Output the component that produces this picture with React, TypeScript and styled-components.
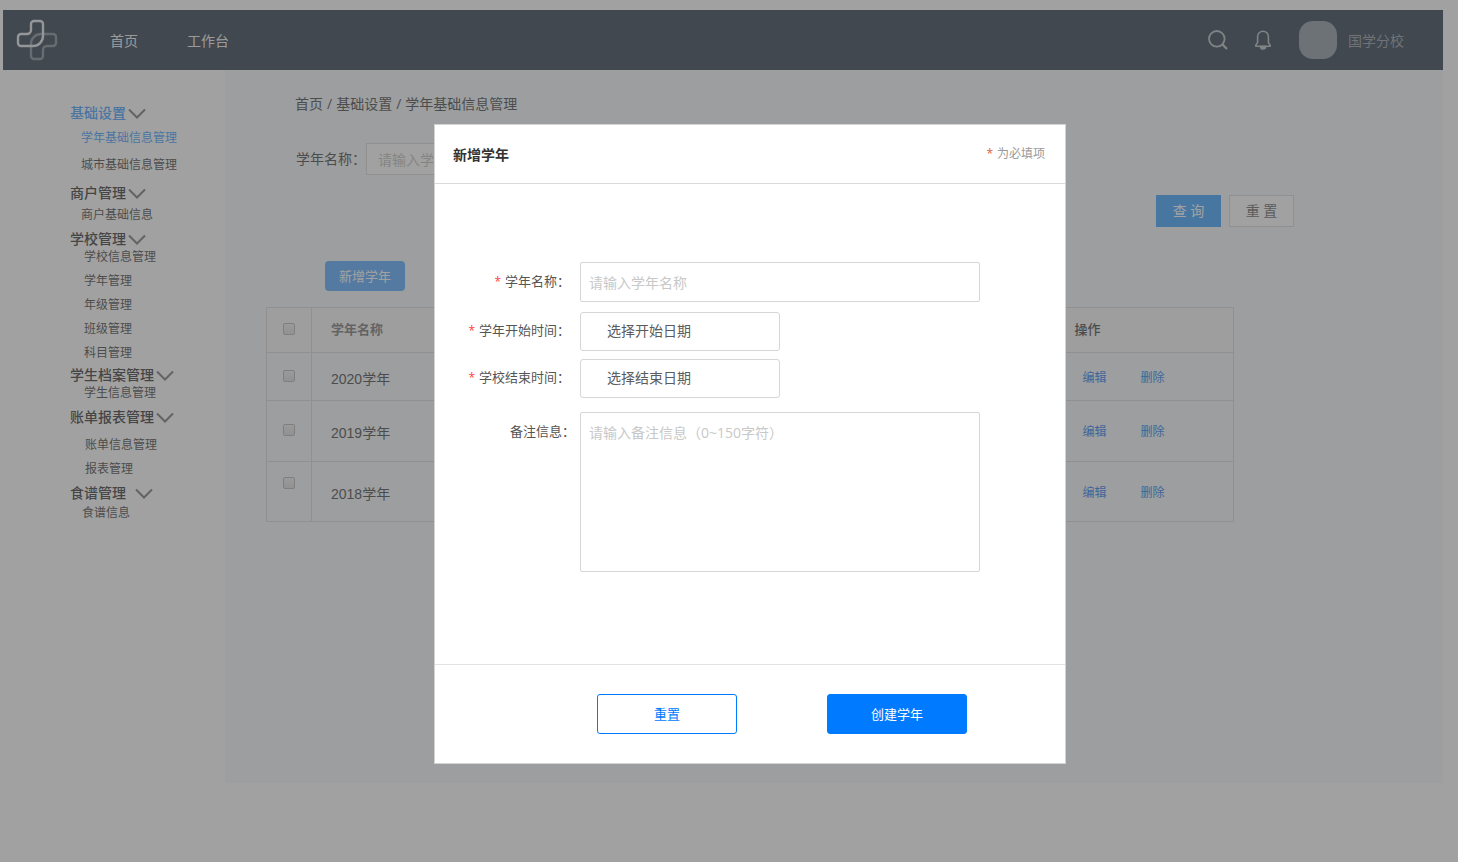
import React from "react";
import styled, { createGlobalStyle } from "styled-components";

const GlobalStyle = createGlobalStyle`
  * { box-sizing: border-box; }
  html, body { margin: 0; background: #fff; }
  body, button, input, textarea {
    font-family: "Open Sans", "Noto Sans CJK SC", sans-serif;
    font-size: 14px;
    line-height: 20px;
    color: #444;
  }
  a { color: inherit; text-decoration: none; }
  ul { list-style: none; margin: 0; padding: 0; }
  h2, h3 { margin: 0; }
`;

const Page = styled.div`
  min-height: 100vh;
  padding: 10px 15px 0 3px;
`;

const TopBar = styled.header`
  display: flex;
  align-items: center;
  height: 60px;
  padding: 0 39px 0 13px;
  background: #2a3a4c;
  color: #f0f0f0;
`;

const TopNav = styled.nav`
  display: flex;
  gap: 49px;
  margin-left: 52px;
  padding-top: 1px;
  flex: 1;
`;

const IconButton = styled.button`
  display: flex;
  padding: 0;
  border: 0;
  background: none;
  color: #b8bdc2;
`;

const TopTools = styled.div`
  display: flex;
  align-items: center;
  gap: 27px;
`;

const Avatar = styled.span`
  width: 38px;
  height: 38px;
  margin: 0 11px 0 28px;
  border-radius: 14px;
  background: #8a97a0;
`;

const UserName = styled.span`
  padding-top: 1px;
  color: #929aa2;
`;

const Columns = styled.div`
  display: flex;
  min-height: 713px;
`;

const Sidebar = styled.aside`
  flex: none;
  width: 222px;
  padding: 35px 0 0 67px;
`;

const MenuGroup = styled.section<{ $before: number }>`
  margin-top: ${(p) => p.$before}px;
`;

const MenuTitle = styled.h3<{ $active?: boolean; $gap?: number }>`
  display: flex;
  align-items: center;
  gap: ${(p) => p.$gap ?? 2}px;
  font-size: 14px;
  font-weight: 500;
  line-height: 16px;
  color: ${(p) => (p.$active ? "#409eff" : "#333")};
`;

const MenuList = styled.ul<{ $indent: number; $before: number; $gap: number }>`
  display: flex;
  flex-direction: column;
  gap: ${(p) => p.$gap}px;
  margin-top: ${(p) => p.$before}px;
  padding-left: ${(p) => p.$indent}px;
`;

const MenuLink = styled.a<{ $active?: boolean }>`
  display: block;
  font-size: 12px;
  line-height: 16px;
  color: ${(p) => (p.$active ? "#409eff" : "#444")};
`;

const Content = styled.main`
  flex: 1;
  min-width: 0;
  padding: 24px 209px 0 41px;
  background: #f4f8fa;
`;

const Breadcrumb = styled.nav`
  display: flex;
  gap: 4px;
  padding-left: 29px;
`;

const FilterRow = styled.div`
  display: flex;
  align-items: center;
  margin-top: 29px;
  padding-left: 30px;
`;

const FilterInput = styled.input`
  width: 200px;
  height: 32px;
  padding: 0 11px;
  border: 1px solid #d9d9d9;
  background: #fff;
  &::placeholder { color: #bfbfbf; opacity: 1; }
`;

const FilterActions = styled.div`
  display: flex;
  justify-content: flex-end;
  gap: 8px;
  margin: 20px -60px 0 0;
`;

const FilterButton = styled.button<{ $primary?: boolean }>`
  width: 65px;
  height: 32px;
  padding: 0;
  border: 1px solid ${(p) => (p.$primary ? "#38a0ff" : "#d9d9d9")};
  background: ${(p) => (p.$primary ? "#38a0ff" : "#fff")};
  color: ${(p) => (p.$primary ? "#fff" : "#666")};
`;

const AddButton = styled.button`
  display: block;
  width: 80px;
  height: 30px;
  margin: 34px 0 16px 59px;
  padding: 0;
  border: 0;
  border-radius: 4px;
  background: #57a9ff;
  color: #fff;
  font-size: 13px;
`;

const DataTable = styled.table`
  width: 100%;
  border-collapse: collapse;
  border: 1px solid #d9d9d9;
  font-family: "Liberation Sans", "Noto Sans CJK SC", sans-serif;
`;

const Row = styled.tr<{ $height: number; $head?: boolean }>`
  height: ${(p) => p.$height}px;
  border-bottom: 1px solid #d9d9d9;
  background: ${(p) => (p.$head ? "#f8f8f8" : "transparent")};
`;

const CheckCell = styled.td<{ $top?: boolean }>`
  width: 45px;
  padding: ${(p) => (p.$top ? "15px 0 0" : "0 0 2px")};
  border-right: 1px solid #d9d9d9;
  text-align: center;
  vertical-align: ${(p) => (p.$top ? "top" : "middle")};
  line-height: 0;
`;

const NameHead = styled.th`
  padding: 0 19px;
  text-align: left;
  font-size: 13px;
  font-weight: 700;
  color: #777;
`;

const ActionHead = styled.th`
  width: 179px;
  padding: 0 0 0 20px;
  text-align: left;
  font-size: 13px;
  font-weight: 500;
`;

const NameCell = styled.td`
  padding: 4px 19px 0;
`;

const ActionCell = styled.td`
  padding: 2px 0 0 28px;
  color: #1f7cf0;
  font-size: 12px;
`;

const ActionLinks = styled.div`
  display: flex;
  gap: 34px;
`;

const CheckBox = styled.input`
  appearance: none;
  width: 12px;
  height: 12px;
  margin: 0;
  border: 1px solid #b4b4b4;
  border-radius: 2px;
  background: linear-gradient(#f0f0f0, #dcdcdc);
`;

const Overlay = styled.div`
  position: fixed;
  inset: 0;
  display: flex;
  justify-content: center;
  align-items: flex-start;
  padding: 124px 0 0 42px;
  background: rgba(84, 84, 84, 0.55);
`;

const Dialog = styled.div`
  width: 632px;
  border: 1px solid #d2d4d4;
  background: #fff;
`;

const DialogHeader = styled.div`
  display: flex;
  align-items: center;
  justify-content: space-between;
  height: 59px;
  padding: 0 20px 0 18px;
  border-bottom: 1px solid #d9d9d9;
`;

const DialogTitle = styled.h2`
  padding-top: 2px;
  font-size: 14px;
  font-weight: 700;
  line-height: 20px;
  color: #333;
`;

const RequiredNote = styled.span`
  font-size: 12px;
  color: #999;
`;

const Star = styled.span<{ $muted?: boolean }>`
  margin-right: 4px;
  font-size: 12px;
  color: ${(p) => (p.$muted ? "#d9633c" : "#ff4040")};
`;

const Form = styled.form`
  display: block;
`;

const Fields = styled.div`
  padding: 78px 85px 92px 0;
`;

const Field = styled.div<{ $before?: number; $top?: boolean }>`
  display: flex;
  align-items: ${(p) => (p.$top ? "flex-start" : "center")};
  margin-top: ${(p) => p.$before ?? 0}px;
`;

const Label = styled.label<{ $wide?: boolean }>`
  flex: none;
  width: ${(p) => (p.$wide ? 140 : 135)}px;
  margin-right: ${(p) => (p.$wide ? 5 : 10)}px;
  padding: ${(p) => (p.$wide ? "9px 0" : "0 0 2px")};
  text-align: right;
  font-size: 13px;
  color: #555;
`;

const TextInput = styled.input`
  flex: 1;
  min-width: 0;
  height: 40px;
  padding: 0 8px;
  border: 1px solid #d6d6d6;
  border-radius: 2px;
  &::placeholder { color: #c8c8c8; opacity: 1; }
`;

const DateInput = styled.input`
  width: 200px;
  height: 39px;
  padding: 0 26px 2px;
  border: 1px solid #d6d6d6;
  border-radius: 3px;
  &::placeholder { color: #5c5c5c; opacity: 1; }
`;

const TextArea = styled.textarea`
  display: block;
  flex: 1;
  min-width: 0;
  height: 160px;
  padding: 10px 8px;
  border: 1px solid #d6d6d6;
  border-radius: 2px;
  resize: none;
  &::placeholder { color: #c8c8c8; opacity: 1; }
`;

const DialogFooter = styled.div`
  display: flex;
  gap: 90px;
  padding: 29px 0 29px 162px;
  border-top: 1px solid #e2e2e2;
`;

const DialogButton = styled.button<{ $primary?: boolean }>`
  width: 140px;
  height: 40px;
  padding: 0;
  border: 1px solid #007aff;
  border-radius: 3px;
  background: ${(p) => (p.$primary ? "#007aff" : "#fff")};
  color: ${(p) => (p.$primary ? "#fff" : "#007aff")};
  font-size: 13px;
`;

const LOGO_ARM =
  "M15 5a3 3 0 0 1 3-3h6a3 3 0 0 1 3 3V17a10 10 0 0 1-10 10H5a3 3 0 0 1-3-3v-6a3 3 0 0 1 3-3h6a4 4 0 0 0 4-4z";

const Logo = () => (
  <svg width="42" height="42" viewBox="0 0 42 42" fill="none" strokeWidth="2.4" aria-hidden="true">
    <path d={LOGO_ARM} stroke="#808b94" transform="rotate(180 21 21)" />
    <path d={LOGO_ARM} stroke="#e4e7ea" />
  </svg>
);

const SearchIcon = () => (
  <svg width="20" height="20" viewBox="0 0 20 20" fill="none" stroke="currentColor" strokeWidth="1.8" aria-hidden="true">
    <circle cx="8.8" cy="8.8" r="7.8" />
    <path d="M14.4 14.4L19 19" strokeWidth="2.2" />
  </svg>
);

const BellIcon = () => (
  <svg width="16" height="20" viewBox="0 0 16 20" fill="none" stroke="currentColor" strokeWidth="1.6" aria-hidden="true">
    <path d="M2.6 12.6V6.6a5.4 5.4 0 0 1 10.8 0v6l1.7 2.4v1.2H.9V15z" />
    <path d="M5.4 16.6a2.6 2.4 0 0 0 5.2 0z" fill="currentColor" />
  </svg>
);

const Chevron = () => (
  <svg width="18" height="12" viewBox="0 0 18 12" fill="none" stroke="#777" strokeWidth="2" aria-hidden="true">
    <path d="M1 2.5l8 8 8-8" />
  </svg>
);

const menu = [
  { title: "基础设置", before: 0, listBefore: 9, gap: 11, indent: 11, items: ["学年基础信息管理", "城市基础信息管理"] },
  { title: "商户管理", before: 12, listBefore: 6, gap: 8, indent: 11, items: ["商户基础信息"] },
  { title: "学校管理", before: 8, listBefore: 2, gap: 8, indent: 14, items: ["学校信息管理", "学年管理", "年级管理", "班级管理", "科目管理"] },
  { title: "学生档案管理", before: 6, listBefore: 2, gap: 8, indent: 14, items: ["学生信息管理"] },
  { title: "账单报表管理", before: 8, listBefore: 12, gap: 8, indent: 15, items: ["账单信息管理", "报表管理"] },
  { title: "食谱管理", before: 8, listBefore: 4, gap: 8, indent: 12, titleGap: 9, items: ["食谱信息"] },
];

const years = [
  { name: "2020学年", height: 48 },
  { name: "2019学年", height: 61 },
  { name: "2018学年", height: 60, checkTop: true },
];

export default function App() {
  return (
    <>
      <GlobalStyle />
      <Page>
        <TopBar>
          <Logo />
          <TopNav>
            <a href="#home">首页</a>
            <a href="#workbench">工作台</a>
          </TopNav>
          <TopTools>
            <IconButton type="button" aria-label="搜索"><SearchIcon /></IconButton>
            <IconButton type="button" aria-label="通知"><BellIcon /></IconButton>
          </TopTools>
          <Avatar />
          <UserName>国学分校</UserName>
        </TopBar>
        <Columns>
          <Sidebar>
            {menu.map((group, g) => (
              <MenuGroup key={group.title} $before={group.before}>
                <MenuTitle $active={g === 0} $gap={group.titleGap}>
                  {group.title}
                  <Chevron />
                </MenuTitle>
                <MenuList $indent={group.indent} $before={group.listBefore} $gap={group.gap}>
                  {group.items.map((item, i) => (
                    <li key={item}>
                      <MenuLink href="#menu" $active={g === 0 && i === 0}>{item}</MenuLink>
                    </li>
                  ))}
                </MenuList>
              </MenuGroup>
            ))}
          </Sidebar>
          <Content>
            <Breadcrumb>
              <a href="#home">首页</a>
              <span>/</span>
              <a href="#base">基础设置</a>
              <span>/</span>
              <span>学年基础信息管理</span>
            </Breadcrumb>
            <FilterRow>
              <label htmlFor="filter-name">学年名称：</label>
              <FilterInput id="filter-name" placeholder="请输入学年名称" />
            </FilterRow>
            <FilterActions>
              <FilterButton type="button" $primary>查 询</FilterButton>
              <FilterButton type="button">重 置</FilterButton>
            </FilterActions>
            <AddButton type="button">新增学年</AddButton>
            <DataTable>
              <thead>
                <Row $height={45} $head>
                  <CheckCell><CheckBox type="checkbox" aria-label="全选" /></CheckCell>
                  <NameHead>学年名称</NameHead>
                  <ActionHead>操作</ActionHead>
                </Row>
              </thead>
              <tbody>
                {years.map((year) => (
                  <Row key={year.name} $height={year.height}>
                    <CheckCell $top={year.checkTop}><CheckBox type="checkbox" aria-label={year.name} /></CheckCell>
                    <NameCell>{year.name}</NameCell>
                    <ActionCell>
                      <ActionLinks>
                        <a href="#edit">编辑</a>
                        <a href="#delete">删除</a>
                      </ActionLinks>
                    </ActionCell>
                  </Row>
                ))}
              </tbody>
            </DataTable>
          </Content>
        </Columns>
      </Page>
      <Overlay>
        <Dialog role="dialog" aria-modal="true" aria-labelledby="dialog-title">
          <DialogHeader>
            <DialogTitle id="dialog-title">新增学年</DialogTitle>
            <RequiredNote><Star $muted>*</Star>为必填项</RequiredNote>
          </DialogHeader>
          <Form>
            <Fields>
              <Field>
                <Label htmlFor="year-name"><Star>*</Star>学年名称：</Label>
                <TextInput id="year-name" placeholder="请输入学年名称" />
              </Field>
              <Field $before={10}>
                <Label htmlFor="year-start"><Star>*</Star>学年开始时间：</Label>
                <DateInput id="year-start" placeholder="选择开始日期" />
              </Field>
              <Field $before={8}>
                <Label htmlFor="year-end"><Star>*</Star>学校结束时间：</Label>
                <DateInput id="year-end" placeholder="选择结束日期" />
              </Field>
              <Field $before={14} $top>
                <Label htmlFor="remark" $wide>备注信息：</Label>
                <TextArea id="remark" placeholder="请输入备注信息（0~150字符）" />
              </Field>
            </Fields>
            <DialogFooter>
              <DialogButton type="reset">重置</DialogButton>
              <DialogButton type="button" $primary>创建学年</DialogButton>
            </DialogFooter>
          </Form>
        </Dialog>
      </Overlay>
    </>
  );
}
